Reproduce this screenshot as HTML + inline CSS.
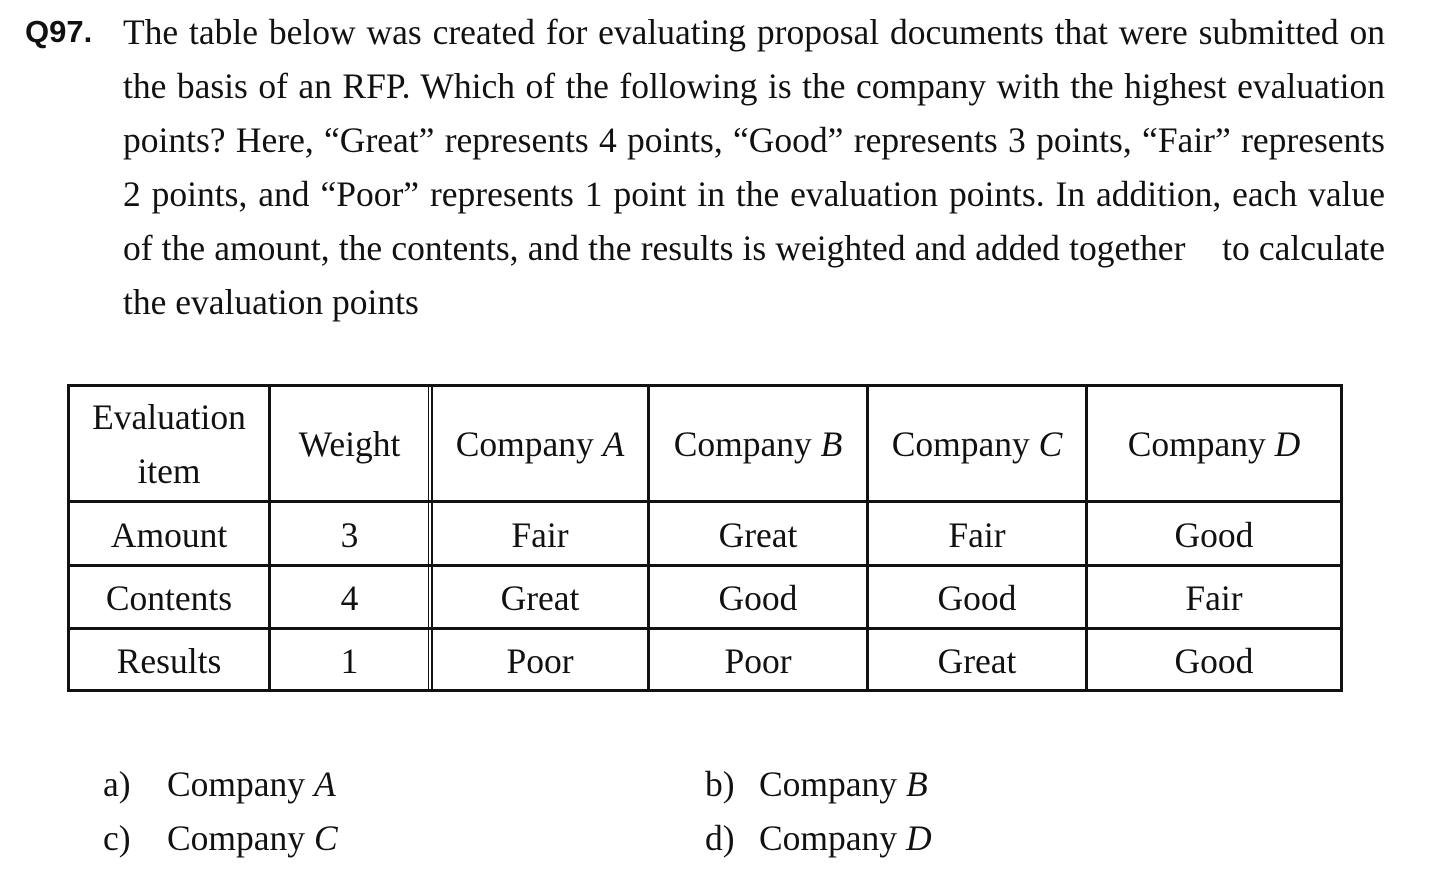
<!DOCTYPE html>
<html><head><meta charset="utf-8"><style>
body{margin:0;width:1450px;height:895px;background:#fff;position:relative;overflow:hidden;color:#111;font-family:"Liberation Serif",serif}
.q{position:absolute;left:25px;top:14px;font:bold 31px "Liberation Sans",sans-serif}
.p{position:absolute;left:123px;top:5px;width:1262px;font-size:35.5px;line-height:54px;text-align:justify}
.l{display:block;text-align:justify;text-align-last:justify;height:54px;white-space:nowrap}
.last{text-align-last:left}
.v{position:absolute;background:#111}
.c{position:absolute;font-size:35.5px;text-align:center;line-height:54px}
.o{position:absolute;font-size:35.5px;line-height:54px}
</style></head><body>
<div class="q">Q97.</div>
<div class="p">
<span class="l">The table below was created for evaluating proposal documents that were submitted on</span>
<span class="l">the basis of an RFP. Which of the following is the company with the highest evaluation</span>
<span class="l">points? Here, “Great” represents 4 points, “Good” represents 3 points, “Fair” represents</span>
<span class="l">2 points, and “Poor” represents 1 point in the evaluation points. In addition, each value</span>
<span class="l">of the amount, the contents, and the results is weighted and added together &nbsp;&nbsp; to calculate</span>
<span class="l last">the evaluation points</span>
</div>
<div class="v" style="left:67px;top:384px;width:1276px;height:3px"></div>
<div class="v" style="left:67px;top:500px;width:1276px;height:3px"></div>
<div class="v" style="left:67px;top:564px;width:1276px;height:3px"></div>
<div class="v" style="left:67px;top:627px;width:1276px;height:3px"></div>
<div class="v" style="left:67px;top:689px;width:1276px;height:3px"></div>
<div class="v" style="left:67px;top:384px;width:3px;height:308px"></div>
<div class="v" style="left:268px;top:384px;width:3px;height:308px"></div>
<div class="v" style="left:428px;top:384px;width:1px;height:308px"></div>
<div class="v" style="left:431px;top:384px;width:2px;height:308px"></div>
<div class="v" style="left:647px;top:384px;width:3px;height:308px"></div>
<div class="v" style="left:866px;top:384px;width:3px;height:308px"></div>
<div class="v" style="left:1085px;top:384px;width:3px;height:308px"></div>
<div class="v" style="left:1340px;top:384px;width:3px;height:308px"></div>
<div class="c" style="left:70px;width:198px;top:390px">Evaluation<br>item</div>
<div class="c" style="left:271px;width:157px;top:417px">Weight</div>
<div class="c" style="left:433px;width:214px;top:417px">Company <i>A</i></div>
<div class="c" style="left:650px;width:216px;top:417px">Company <i>B</i></div>
<div class="c" style="left:869px;width:216px;top:417px">Company <i>C</i></div>
<div class="c" style="left:1088px;width:252px;top:417px">Company <i>D</i></div>
<div class="c" style="left:70px;width:198px;top:508px">Amount</div>
<div class="c" style="left:271px;width:157px;top:508px">3</div>
<div class="c" style="left:433px;width:214px;top:508px">Fair</div>
<div class="c" style="left:650px;width:216px;top:508px">Great</div>
<div class="c" style="left:869px;width:216px;top:508px">Fair</div>
<div class="c" style="left:1088px;width:252px;top:508px">Good</div>
<div class="c" style="left:70px;width:198px;top:571px">Contents</div>
<div class="c" style="left:271px;width:157px;top:571px">4</div>
<div class="c" style="left:433px;width:214px;top:571px">Great</div>
<div class="c" style="left:650px;width:216px;top:571px">Good</div>
<div class="c" style="left:869px;width:216px;top:571px">Good</div>
<div class="c" style="left:1088px;width:252px;top:571px">Fair</div>
<div class="c" style="left:70px;width:198px;top:634px">Results</div>
<div class="c" style="left:271px;width:157px;top:634px">1</div>
<div class="c" style="left:433px;width:214px;top:634px">Poor</div>
<div class="c" style="left:650px;width:216px;top:634px">Poor</div>
<div class="c" style="left:869px;width:216px;top:634px">Great</div>
<div class="c" style="left:1088px;width:252px;top:634px">Good</div>
<div class="o" style="left:103px;top:757px">a)</div>
<div class="o" style="left:167px;top:757px">Company <i>A</i></div>
<div class="o" style="left:103px;top:811px">c)</div>
<div class="o" style="left:167px;top:811px">Company <i>C</i></div>
<div class="o" style="left:705px;top:757px">b)</div>
<div class="o" style="left:759px;top:757px">Company <i>B</i></div>
<div class="o" style="left:705px;top:811px">d)</div>
<div class="o" style="left:759px;top:811px">Company <i>D</i></div>
</body></html>
